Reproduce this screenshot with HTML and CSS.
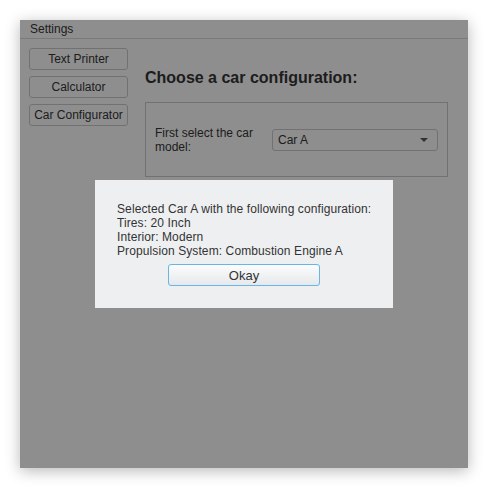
FILE: index.html
```html
<!DOCTYPE html>
<html>
<head>
<meta charset="utf-8">
<link rel="stylesheet" href="styles.css">
</head>
<body>
<div class="stage">
  <div class="window">
    <div class="menubar"><span class="menu">Settings</span></div>
    <div class="content">
      <div class="sidebar">
        <button class="nav-btn">Text Printer</button>
        <button class="nav-btn">Calculator</button>
        <button class="nav-btn">Car Configurator</button>
      </div>
      <div class="main">
        <h1 class="title">Choose a car configuration:</h1>
        <div class="group">
          <div class="label">First select the car model:</div>
          <div class="combo"><span>Car A</span><span class="arrow"></span></div>
        </div>
      </div>
    </div>
    <div class="backdrop">
      <div class="dialog">
        <div class="msg">Selected Car A with the following configuration:<br>Tires: 20 Inch<br>Interior: Modern<br>Propulsion System: Combustion Engine A</div>
        <button class="okay">Okay</button>
      </div>
    </div>
  </div>
</div>
</body>
</html>
```
FILE: styles.css
```css
html, body { margin: 0; padding: 0; background: #ffffff; }
body { font-family: "Liberation Sans", Arial, sans-serif; font-size: 12px; color: #333; }
.stage { padding: 20px; }
.window {
  position: relative;
  width: 448px; height: 448px;
  background: #f4f4f4;
  box-shadow: 0 3px 14px rgba(0,0,0,0.28);
  box-sizing: border-box;
}
.menubar {
  height: 18px;
  border-bottom: 1px solid #cfcfcf;
  padding-left: 10px;
  line-height: 19px;
}
.content { display: flex; padding: 9px 0 0 9px; }
.sidebar { display: flex; flex-direction: column; gap: 6px; width: 99px; }
.nav-btn {
  font: inherit; color: #333;
  height: 22px; width: 99px; padding: 0;
  background: #f4f4f4;
  border: 1px solid #c2c2c2; border-radius: 3px;
}
.main { margin-left: 17px; width: 303px; }
.title { font-size: 16px; font-weight: bold; margin: 20px 0 0; height: 19px; line-height: 19px; color: #333; }
.group {
  margin-top: 15px; height: 75px; box-sizing: border-box;
  border: 1px solid #c2c2c2;
  display: flex; align-items: center; padding: 0 9px;
}
.label { width: 117px; line-height: 14px; margin-top: 1px; }
.combo {
  width: 166px; height: 22px; box-sizing: border-box;
  border: 1px solid #c2c2c2; border-radius: 3px;
  display: flex; align-items: center; justify-content: space-between;
  padding: 0 9px 0 5px;
}
.arrow { width: 0; height: 0; border-left: 4px solid transparent; border-right: 4px solid transparent; border-top: 4px solid #555; }
.backdrop {
  position: absolute; inset: 0;
  background: rgba(0,0,0,0.414);
  display: flex; align-items: center; justify-content: center;
}
.dialog {
  width: 298px; height: 128px; box-sizing: border-box;
  background: #eeeff1;
  padding: 22px 0 0 22px;
  display: flex; flex-direction: column;
}
.msg { line-height: 14px; color: #333; letter-spacing: 0.1px; }
.okay {
  font: inherit; font-size: 13px; color: #333;
  width: 152px; height: 22px; padding: 0;
  margin: 6px 0 0 51px;
  border: 1px solid #66b6e6; border-radius: 3px;
  background: linear-gradient(#fbfcfd, #e6e8eb);
}
```
